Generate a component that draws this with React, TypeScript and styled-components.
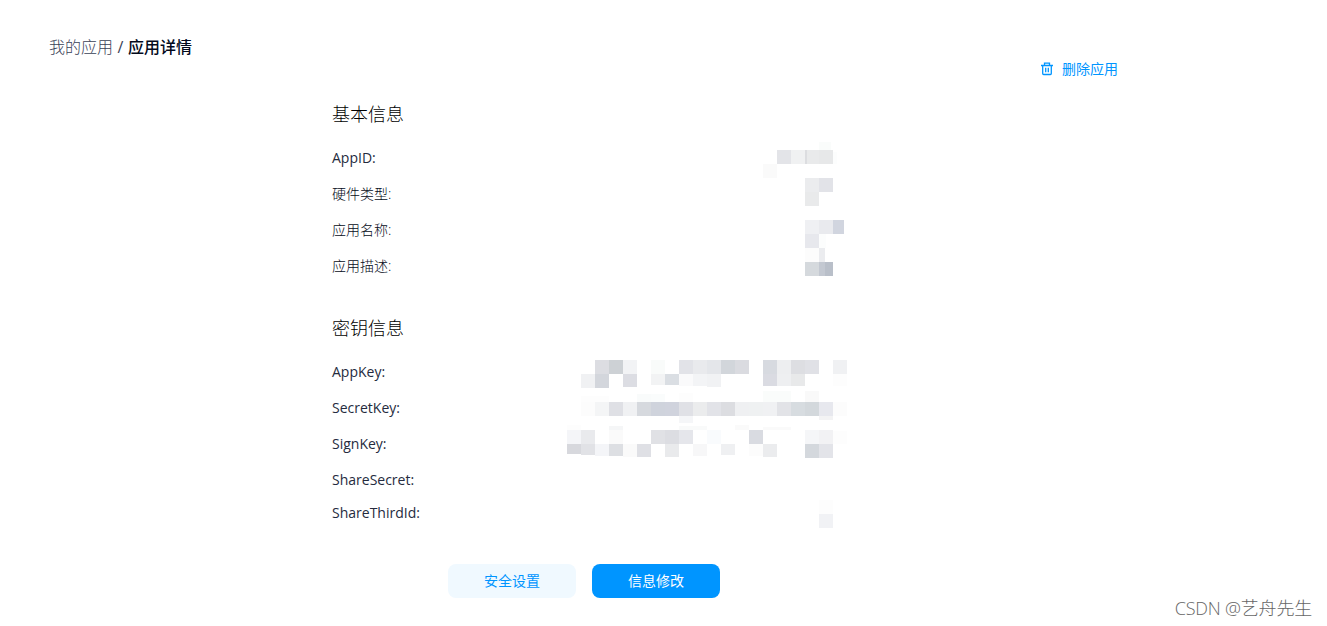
import styled, { createGlobalStyle } from 'styled-components'

type Cell = [x: number, y: number, color: string, width?: number, height?: number]

const basicLabels = ['AppID:', '硬件类型:', '应用名称:', '应用描述:']
const keyLabels = ['AppKey:', 'SecretKey:', 'SignKey:', 'ShareSecret:', 'ShareThirdId:']

const basicCells: Cell[] = [
  [252, 2, '#fafcfb', 12, 8], [266, 12, '#fcfdfd', 4, 12],
  [210, 10, '#e3e4e8'], [224, 10, '#f0f1f2'], [238, 10, '#e9eaeb'], [252, 10, '#e7e8e9'], [238, 10, '#dcdde0', 2],
  [196, 24, '#fafafa'],
  [238, 38, '#ebecee'], [252, 38, '#e2e3e8'], [238, 52, '#e9eaeb'],
  [238, 80, '#eff0f3'], [252, 80, '#e9eaee'], [266, 80, '#d1d5df', 11],
  [238, 94, '#e7e8ed'], [252, 94, '#fcfdfd', 7],
  [238, 108, '#fcfcfc'], [252, 108, '#ebecef', 6],
  [238, 122, '#d5d9dd'], [252, 122, '#c3c8d1', 6], [258, 122, '#b9bfc9', 8]
]

const keyCells: Cell[] = [
  [28, 6, '#dcdde2'], [42, 6, '#cdd1d5'], [56, 6, '#f2f3f5'], [84, 6, '#f9fbfa'], [112, 6, '#e2e3e8'],
  [126, 6, '#e9eaed'], [140, 6, '#e4e6ea'], [154, 6, '#d2d6db'], [168, 6, '#dadbe0'], [196, 6, '#d7dae0'],
  [210, 6, '#edeef0'], [224, 6, '#dddee2'], [238, 6, '#e0e1e6'], [266, 6, '#f0f1f3'],
  [14, 20, '#f0f1f3'], [28, 20, '#d3d6dc'], [56, 20, '#dcdde3', 14, 13], [84, 20, '#f2f3f4', 14, 11],
  [98, 20, '#dadee3', 14, 11], [112, 20, '#fafafb', 14, 12], [126, 20, '#f3f4f6', 14, 12],
  [140, 20, '#f1f2f4', 14, 13], [196, 20, '#dadbe2', 14, 12], [210, 20, '#eeeff1', 14, 12],
  [224, 20, '#e8e9ea', 14, 12], [266, 20, '#fdfdfd', 14, 12],
  [14, 42, '#fdfdfd', 28, 6], [70, 40, '#f9fbfb', 14, 8], [84, 40, '#fafcfc', 14, 8], [112, 39, '#fdfdfd', 14, 9],
  [196, 37, '#fafcfb', 28, 11], [238, 37, '#f9f9f9', 14, 11],
  [14, 48, '#fcfcfc'], [28, 48, '#f4f5f6'], [42, 48, '#dfe0e5'], [56, 48, '#f0f1f3'], [70, 48, '#d6d9de'],
  [84, 48, '#cfd3dc'], [98, 48, '#d0d3dd'], [112, 48, '#e0e1e6'], [126, 48, '#ebeced'], [140, 48, '#e2e3e8'],
  [154, 48, '#dcdde1'], [168, 48, '#eff0f2'], [182, 48, '#eff1f2'], [196, 48, '#f0f1f3'], [210, 48, '#e2e3e7'],
  [224, 48, '#d7dce0'], [238, 48, '#d3d8dc'], [252, 48, '#e7e8ee'], [266, 48, '#fcfcfc'],
  [112, 62, '#f5f6f8', 14, 7], [252, 62, '#f3f3f4', 14, 4],
  [0, 71, '#fdfdfd', 14, 5], [42, 72, '#f5f6f7', 14, 4], [112, 72, '#f9fafa', 28, 4],
  [168, 71, '#fafafa', 14, 5], [196, 73, '#fafafa', 28, 3],
  [0, 76, '#f4f5f8'], [14, 76, '#e9eaed'], [42, 76, '#fafafa'], [84, 76, '#e0e1e5'], [98, 76, '#dcdde2'],
  [112, 76, '#e5e6eb'], [140, 76, '#f9fbfd'], [182, 76, '#d9dbe1'], [238, 76, '#f5f6f8'], [252, 76, '#f2f2f4'],
  [266, 77, '#fdfdfd', 14, 13],
  [0, 90, '#d7d8dd', 14, 10], [14, 90, '#e1e2e6', 14, 11], [28, 90, '#f4f5f8', 14, 12], [42, 90, '#dddfe3', 14, 12],
  [56, 90, '#fafafa', 14, 13], [70, 90, '#dfe0e5', 14, 13], [98, 90, '#e9eaec', 14, 13], [126, 90, '#f7f7f8', 14, 12],
  [154, 90, '#eff0f2', 14, 11], [182, 90, '#fcfcfc', 14, 12], [196, 90, '#ebecee', 14, 13],
  [238, 90, '#d4d8dd'], [252, 90, '#e3e4e9'],
  [252, 146, '#fdfdfd'], [252, 160, '#f1f2f5']
]

function MaskedValues({ cells }: { cells: Cell[] }) {
  return (
    <Mask width="280" height="180" shapeRendering="crispEdges">
      {cells.map(([x, y, color, width = 14, height = 14], i) => (
        <rect key={i} x={x} y={y} width={width} height={height} fill={color} />
      ))}
    </Mask>
  )
}

function TrashIcon() {
  return (
    <svg width="12" height="14" viewBox="0 0 12 14" fill="none" stroke="currentColor" strokeWidth="1.3">
      <path d="M0 3.5H12M3.5 3.2V1.2H8.5V3.2M1.7 3.7V11.6Q1.7 12.5 2.6 12.5H9.4Q10.3 12.5 10.3 11.6V3.7M4.7 5.8V10.2M7.3 5.8V10.2" />
    </svg>
  )
}

export default function App() {
  return (
    <>
      <GlobalStyle />
      <Page>
        <Breadcrumb>
          <span>我的应用</span>
          <Separator>/</Separator>
          <Current>应用详情</Current>
        </Breadcrumb>

        <Content>
          <DeleteButton>
            <TrashIcon />
            删除应用
          </DeleteButton>

          <Section>
            <Title>基本信息</Title>
            <Fields>
              {basicLabels.map((label, i) => (
                <Field key={label} $light={i > 0}>
                  {label}
                </Field>
              ))}
              <MaskedValues cells={basicCells} />
            </Fields>
          </Section>

          <Section>
            <Title>密钥信息</Title>
            <Fields>
              {keyLabels.map(label => (
                <Field key={label}>{label}</Field>
              ))}
              <MaskedValues cells={keyCells} />
            </Fields>
          </Section>

          <Actions>
            <Button>安全设置</Button>
            <Button $primary>信息修改</Button>
          </Actions>
        </Content>

        <Watermark>CSDN @艺舟先生</Watermark>
      </Page>
    </>
  )
}

const GlobalStyle = createGlobalStyle`
  * {
    box-sizing: border-box;
  }

  body {
    margin: 0;
    background-color: #fff;
    color: #171d31;
    font-family: 'Open Sans', 'Noto Sans CJK SC', sans-serif;
    font-size: 14px;
  }
`

const Page = styled.div`
  position: relative;
  height: 626px;
  padding: 35px 49px 0;
  overflow: hidden;
`

const Breadcrumb = styled.nav`
  display: flex;
  height: 24px;
  line-height: 24px;
  font-size: 16px;
  font-weight: 300;
  color: #3a4257;
`

const Separator = styled.span`
  width: 15px;
  text-align: center;
  font-weight: 400;
`

const Current = styled.strong`
  font-weight: 500;
  color: #030a1c;
`

const Content = styled.main`
  width: 788px;
  margin-left: 283px;
`

const DeleteButton = styled.button`
  display: flex;
  align-items: center;
  gap: 9px;
  height: 20px;
  margin: 0 2px 0 auto;
  padding: 0;
  border: none;
  background: none;
  color: #0095ff;
  font-family: inherit;
  font-size: 14px;
  line-height: 20px;
`

const Section = styled.section`
  margin-bottom: 32px;
`

const Title = styled.h2`
  height: 24px;
  margin: 0;
  line-height: 24px;
  font-size: 18px;
  font-weight: 300;
  color: #000;

  ${DeleteButton} + ${Section} & {
    margin-top: 23px;
  }
`

const Fields = styled.div`
  position: relative;
  padding-top: 14px;
`

const Field = styled.div<{ $light?: boolean }>`
  height: 36px;
  line-height: 36px;
  font-weight: ${({ $light }) => ($light ? 300 : 400)};
  color: ${({ $light }) => ($light ? '#050b20' : '#252b3e')};

  &:nth-child(5) {
    height: 30px;
    line-height: 30px;
  }
`

const Mask = styled.svg`
  position: absolute;
  top: 14px;
  left: 235px;
`

const Actions = styled.div`
  display: flex;
  gap: 16px;
  margin-top: 36px;
  margin-left: 116px;
`

const Button = styled.button<{ $primary?: boolean }>`
  width: 128px;
  height: 34px;
  padding: 0;
  border: none;
  border-radius: 8px;
  background-color: ${({ $primary }) => ($primary ? '#0095ff' : '#f0f9ff')};
  color: ${({ $primary }) => ($primary ? '#fff' : '#0095ff')};
  font-family: inherit;
  font-size: 14px;
  line-height: 34px;
`

const Watermark = styled.span`
  position: absolute;
  right: 15px;
  bottom: 6px;
  line-height: 24px;
  font-size: 18px;
  font-weight: 300;
  letter-spacing: -0.2px;
  color: #666;
`
